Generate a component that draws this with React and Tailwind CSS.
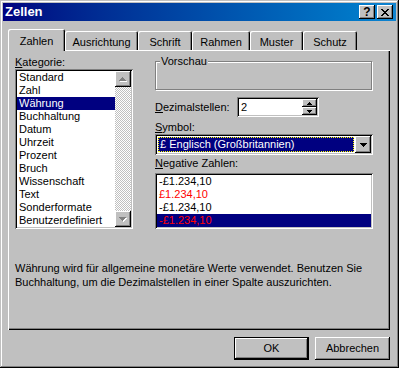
const raised = "shadow-[inset_-1px_-1px_#000,inset_1px_1px_#fff,inset_-2px_-2px_#808080]";
const sunken = "shadow-[inset_1px_1px_#808080,inset_-1px_-1px_#fff,inset_2px_2px_#000,inset_-2px_-2px_#c0c0c0]";

const kategorien = [
  "Standard",
  "Zahl",
  "Währung",
  "Buchhaltung",
  "Datum",
  "Uhrzeit",
  "Prozent",
  "Bruch",
  "Wissenschaft",
  "Text",
  "Sonderformate",
  "Benutzerdefiniert",
];

const negative = [
  { text: "-£1.234,10", red: false },
  { text: "£1.234,10", red: true },
  { text: "-£1.234,10", red: false },
  { text: "-£1.234,10", red: true, selected: true },
];

const tabs = [
  { label: "Ausrichtung", w: "w-[73px]" },
  { label: "Schrift", w: "w-[54px]" },
  { label: "Rahmen", w: "w-[58px]" },
  { label: "Muster", w: "w-[53px]" },
  { label: "Schutz", w: "w-[54px]" },
];

function Arrow({ dir, disabled }) {
  const d = dir === "up" ? "M3 0h1v1h1v1h1v1h1v1H0V3h1V2h1V1h1z" : "M0 0h7v1H6v1H5v1H4v1H3V3H2V2H1V1H0z";
  if (disabled) {
    return (
      <svg width="8" height="5" viewBox="0 0 8 5" shapeRendering="crispEdges">
        <path d={d} fill="#fff" transform="translate(1 1)" />
        <path d={d} fill="#808080" />
      </svg>
    );
  }
  return (
    <svg width="7" height="4" viewBox="0 0 7 4" shapeRendering="crispEdges">
      <path d={d} fill="#000" />
    </svg>
  );
}

function SmallArrow({ dir }) {
  const d = dir === "up" ? "M2 0h1v1h1v1h1v1H0V2h1V1h1z" : "M0 0h5v1H4v1H3v1H2V2H1V1H0z";
  return (
    <svg width="5" height="3" viewBox="0 0 5 3" shapeRendering="crispEdges">
      <path d={d} fill="#000" />
    </svg>
  );
}

function U({ children }) {
  return <span className="underline underline-offset-[1px]">{children}</span>;
}

export default function App() {
  return (
    <div className="w-[399px] h-[368px] bg-[#c0c0c0] p-[3px] flex flex-col text-[11px] leading-[13px] text-black font-['Liberation_Sans',Arial,sans-serif] shadow-[inset_-1px_-1px_#000,inset_1px_1px_#c0c0c0,inset_-2px_-2px_#808080,inset_2px_2px_#fff]">
      {/* title bar */}
      <div className="h-[18px] bg-linear-to-r from-[#000080] to-[#1084d0] flex items-center pl-[2px] pr-[3px]">
        <span className="text-white font-bold text-[13px] leading-[16px]">Zellen</span>
        <div className="ml-auto flex gap-[2px]">
          <div className={`w-[16px] h-[14px] bg-[#c0c0c0] flex items-center justify-center ${raised}`}>
            <span className="font-bold text-[12px] leading-[12px] pb-[1px]">?</span>
          </div>
          <div className={`w-[16px] h-[14px] bg-[#c0c0c0] flex items-center justify-center ${raised}`}>
            <svg width="8" height="7" viewBox="0 0 8 7" shapeRendering="crispEdges">
              <path d="M0 0h2v1h1v1h2V1h1V0h2v1H7v1H6v1H5v1h1v1h1v1h1v1H6V6H5V5H3v1H2v1H0V6h1V5h1V4h1V3H2V2H1V1H0z" fill="#000" />
            </svg>
          </div>
        </div>
      </div>

      <div className="flex flex-col px-[5px] pt-[8px]">
        {/* tabs */}
        <div className="flex items-end h-[21px]">
          <div className="relative z-10 w-[57px] h-[22px] -mb-[1px] bg-[#c0c0c0] rounded-t-[2px] flex justify-center pt-[6px] shadow-[inset_1px_1px_#fff,inset_-1px_0_#000,inset_-2px_0_#808080]">
            Zahlen
          </div>
          {tabs.map((t) => (
            <div
              key={t.label}
              className={`${t.w} h-[19px] bg-[#c0c0c0] rounded-t-[2px] flex justify-center pt-[5px] shadow-[inset_1px_1px_#fff,inset_-1px_0_#000,inset_-2px_0_#808080]`}
            >
              {t.label}
            </div>
          ))}
        </div>

        {/* panel */}
        <div className="w-[382px] h-[280px] bg-[#c0c0c0] pt-[6px] px-[7px] shadow-[inset_1px_1px_#fff,inset_-1px_-1px_#000,inset_-2px_-2px_#808080]">
          <div className="flex">
            <div className="w-[118px] flex flex-col">
              <div className="h-[13px]">
                <U>K</U>ategorie:
              </div>
              <div className={`h-[160px] p-[2px] bg-white flex ${sunken}`}>
                <div className="flex-1 flex flex-col">
                  {kategorien.map((k) => (
                    <div
                      key={k}
                      className={`h-[13px] pl-[2px] whitespace-nowrap ${k === "Währung" ? "bg-[#000080] text-white" : ""}`}
                    >
                      {k}
                    </div>
                  ))}
                </div>
                <div className="w-[16px] flex flex-col">
                  <div className={`h-[16px] bg-[#c0c0c0] flex items-center justify-center ${raised}`}>
                    <Arrow dir="up" disabled />
                  </div>
                  <div className="flex-1 bg-[repeating-conic-gradient(#fff_0_25%,#c0c0c0_0_50%)] bg-[length:2px_2px]" />
                  <div className={`h-[16px] bg-[#c0c0c0] flex items-center justify-center ${raised}`}>
                    <Arrow dir="down" disabled />
                  </div>
                </div>
              </div>
            </div>

            <div className="ml-[22px] w-[218px] flex flex-col">
              <div className="mt-[5px] w-[217px] h-[29px] border border-[#808080] shadow-[inset_1px_1px_#fff,1px_1px_#fff]">
                <div className="-mt-[7px] ml-[4px] px-[1px] w-fit bg-[#c0c0c0]">Vorschau</div>
              </div>

              <div className="mt-[7px] flex items-center h-[20px]">
                <div className="w-[82px]">
                  <U>D</U>ezimalstellen:
                </div>
                <div className={`w-[82px] h-[20px] p-[2px] bg-white flex ${sunken}`}>
                  <div className="flex-1 pl-[2px] pt-[2px]">2</div>
                  <div className="w-[15px] flex flex-col">
                    <div className={`flex-1 bg-[#c0c0c0] flex items-center justify-center ${raised}`}>
                      <SmallArrow dir="up" />
                    </div>
                    <div className={`flex-1 bg-[#c0c0c0] flex items-center justify-center ${raised}`}>
                      <SmallArrow dir="down" />
                    </div>
                  </div>
                </div>
              </div>

              <div className="mt-[4px] h-[13px]">
                <U>S</U>ymbol:
              </div>
              <div className={`h-[21px] p-[2px] bg-white flex ${sunken}`}>
                <div className="flex-1 p-[1px]">
                  <div className="h-full bg-[#000080] text-white border border-dotted border-[#ffff00] pl-[1px] leading-[13px] whitespace-nowrap">
                    £ Englisch (Großbritannien)
                  </div>
                </div>
                <div className={`w-[16px] bg-[#c0c0c0] flex items-center justify-center ${raised}`}>
                  <Arrow dir="down" />
                </div>
              </div>

              <div className="mt-[2px] h-[13px]">
                <U>N</U>egative Zahlen:
              </div>
              <div className={`mt-[3px] h-[56px] p-[2px] bg-white flex flex-col ${sunken}`}>
                {negative.map((n, i) => (
                  <div
                    key={i}
                    className={`h-[13px] pl-[2px] ${n.selected ? "bg-[#000080]" : ""} ${n.red ? "text-[#ff0000]" : ""}`}
                  >
                    {n.text}
                  </div>
                ))}
              </div>
            </div>
          </div>

          <p className="mt-[32px] leading-[14px]">
            Währung wird für allgemeine monetäre Werte verwendet. Benutzen Sie
            <br />
            Buchhaltung, um die Dezimalstellen in einer Spalte auszurichten.
          </p>
        </div>

        {/* buttons */}
        <div className="w-[382px] mt-[7px] flex justify-end gap-[6px]">
          <div className="w-[75px] h-[23px] border border-black">
            <div className={`w-full h-full bg-[#c0c0c0] flex items-center justify-center ${raised}`}>OK</div>
          </div>
          <div className={`w-[75px] h-[23px] bg-[#c0c0c0] flex items-center justify-center ${raised}`}>Abbrechen</div>
        </div>
      </div>
    </div>
  );
}
